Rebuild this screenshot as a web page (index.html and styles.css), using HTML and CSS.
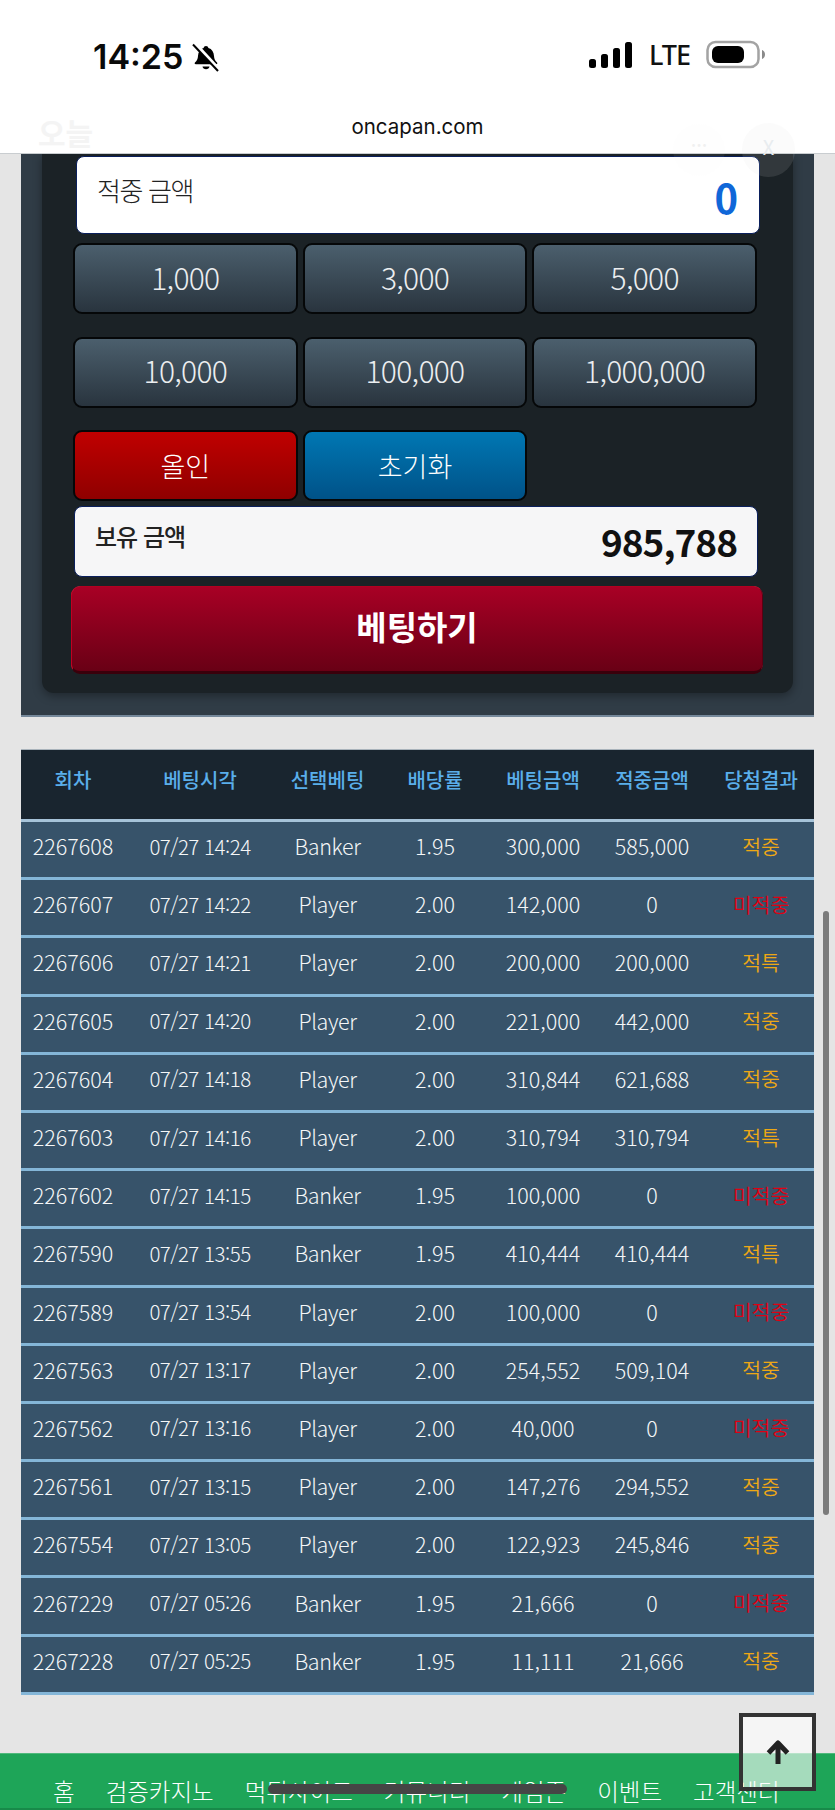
FILE: index.html
```html
<!DOCTYPE html>
<html lang="ko">
  <head>
    <meta charset="utf-8">
    <title>oncapan</title>
    <link rel="stylesheet" href="styles.css">
  </head>

  <body>
    <div class="top-bar">
      <div class="status-row">
        <div class="status-left">
          <span class="clock">14:25</span>
          <svg class="bell" width="28" height="30" viewBox="0 0 28 28">
            <path d="M14 3c1.300 0 2.200.9 2.400 2 3.600 1 5.400 4 5.600 8 .1 3 1.200 4.800 3 6.500.7.700.3 1.800-.8 1.800H3.800c-1.100 0-1.500-1.100-.8-1.800 1.800-1.700 2.900-3.500 3-6.500.2-4 2-7 5.600-8 .2-1.100 1.100-2 2.400-2z" fill="#000"/>
            <path d="M10.500 23.500h7c-.3 1.700-1.700 2.800-3.500 2.800s-3.200-1.100-3.500-2.800z" fill="#000"/>
            <path d="M3 .5l24 26" stroke="#fff" stroke-width="3.500"/>
            <path d="M1 1.500l25 26.500" stroke="#000" stroke-width="2"/>
          </svg>
        </div>
        <div class="status-right">
          <svg width="44" height="28" viewBox="0 0 44 28">
            <rect x="0" y="18" width="7" height="9" rx="2.500"/>
            <rect x="12" y="13" width="7" height="14" rx="2.500"/>
            <rect x="24" y="7" width="7" height="20" rx="2.500"/>
            <rect x="36" y="1" width="7" height="26" rx="2.500"/>
          </svg>
          <span class="lte">LTE</span>
          <svg width="60" height="30" viewBox="0 0 60 30">
            <rect x="1.500" y="2" width="51" height="25" rx="8" fill="#fff" stroke="#a3a3a3" stroke-width="2.500"/>
            <rect x="6" y="6" width="32" height="17" rx="6" fill="#000"/>
            <path d="M56 10c2 .5 3 2.500 3 4.500s-1 4-3 4.500z" fill="#8a8a8a"/>
          </svg>
        </div>
      </div>
      <div class="url-row">oncapan.com</div>
      <div class="ghost-title">오늘</div>
    </div>

    <div class="bet-panel">
      <div class="bet-inner">
        <div class="amount-box win-box">
          <span class="amount-label">적중 금액</span>
          <span class="amount-value blue">0</span>
        </div>

        <div class="chip-grid">
          <button class="chip">1,000</button>
          <button class="chip">3,000</button>
          <button class="chip">5,000</button>
          <button class="chip">10,000</button>
          <button class="chip">100,000</button>
          <button class="chip">1,000,000</button>
          <button class="chip chip-red">올인</button>
          <button class="chip chip-blue">초기화</button>
        </div>

        <div class="amount-box hold-box">
          <span class="amount-label bold">보유 금액</span>
          <span class="amount-value">985,788</span>
        </div>

        <button class="bet-button">베팅하기</button>
      </div>
    </div>

    <table class="history">
      <colgroup>
        <col class="c1"><col class="c2"><col class="c3"><col class="c4"><col class="c5"><col class="c6"><col class="c7">
      </colgroup>
      <thead>
        <tr>
          <th>회차</th>
          <th>베팅시각</th>
          <th>선택베팅</th>
          <th>배당률</th>
          <th>베팅금액</th>
          <th>적중금액</th>
          <th>당첨결과</th>
        </tr>
      </thead>
      <tbody>
        <tr><td>2267608</td><td>07/27 14:24</td><td>Banker</td><td>1.95</td><td>300,000</td><td>585,000</td><td class="hit">적중</td></tr>
        <tr><td>2267607</td><td>07/27 14:22</td><td>Player</td><td>2.00</td><td>142,000</td><td>0</td><td class="miss">미적중</td></tr>
        <tr><td>2267606</td><td>07/27 14:21</td><td>Player</td><td>2.00</td><td>200,000</td><td>200,000</td><td class="hit">적특</td></tr>
        <tr><td>2267605</td><td>07/27 14:20</td><td>Player</td><td>2.00</td><td>221,000</td><td>442,000</td><td class="hit">적중</td></tr>
        <tr><td>2267604</td><td>07/27 14:18</td><td>Player</td><td>2.00</td><td>310,844</td><td>621,688</td><td class="hit">적중</td></tr>
        <tr><td>2267603</td><td>07/27 14:16</td><td>Player</td><td>2.00</td><td>310,794</td><td>310,794</td><td class="hit">적특</td></tr>
        <tr><td>2267602</td><td>07/27 14:15</td><td>Banker</td><td>1.95</td><td>100,000</td><td>0</td><td class="miss">미적중</td></tr>
        <tr><td>2267590</td><td>07/27 13:55</td><td>Banker</td><td>1.95</td><td>410,444</td><td>410,444</td><td class="hit">적특</td></tr>
        <tr><td>2267589</td><td>07/27 13:54</td><td>Player</td><td>2.00</td><td>100,000</td><td>0</td><td class="miss">미적중</td></tr>
        <tr><td>2267563</td><td>07/27 13:17</td><td>Player</td><td>2.00</td><td>254,552</td><td>509,104</td><td class="hit">적중</td></tr>
        <tr><td>2267562</td><td>07/27 13:16</td><td>Player</td><td>2.00</td><td>40,000</td><td>0</td><td class="miss">미적중</td></tr>
        <tr><td>2267561</td><td>07/27 13:15</td><td>Player</td><td>2.00</td><td>147,276</td><td>294,552</td><td class="hit">적중</td></tr>
        <tr><td>2267554</td><td>07/27 13:05</td><td>Player</td><td>2.00</td><td>122,923</td><td>245,846</td><td class="hit">적중</td></tr>
        <tr><td>2267229</td><td>07/27 05:26</td><td>Banker</td><td>1.95</td><td>21,666</td><td>0</td><td class="miss">미적중</td></tr>
        <tr><td>2267228</td><td>07/27 05:25</td><td>Banker</td><td>1.95</td><td>11,111</td><td>21,666</td><td class="hit">적중</td></tr>
      </tbody>
    </table>

    <div class="bottom-nav">
      <a>홈</a>
      <a>검증카지노</a>
      <a>먹튀사이트</a>
      <a>커뮤니티</a>
      <a>게임존</a>
      <a>이벤트</a>
      <a>고객센터</a>
    </div>

    <div class="ghost-more">...</div>
    <div class="ghost-close">X</div>
    <div class="to-top">
      <svg width="28" height="28" viewBox="0 0 28 28">
        <path d="M14 25V5M4.500 14L14 4l9.500 10" fill="none" stroke="#222" stroke-width="5" stroke-linejoin="round"/>
      </svg>
    </div>
    <div class="home-bar"></div>
    <div class="scroll-thumb"></div>
  </body>
</html>
```

FILE: styles.css
```css
* {
  box-sizing: border-box;
}

html,
body {
  margin: 0;
  height: 1810px;
  overflow: hidden;
}

body {
  position: relative;
  background-color: #e5e5e5;
  font-family: "Noto Sans CJK KR", sans-serif;
}

/* phone status bar + url */
.top-bar {
  position: relative;
  height: 154px;
  background-color: #fff;
  border-bottom: 1px solid #c9cdd0;
}

.status-row {
  height: 113px;
  padding: 37px 69px 0 93px;
  display: flex;
  justify-content: space-between;
  align-items: flex-start;
}

.status-left {
  display: flex;
  align-items: center;
  gap: 9px;
}

.clock {
  font-family: "Inter", sans-serif;
  font-weight: 600;
  font-size: 34px;
  line-height: 40px;
  color: #0a0a0a;
}

.status-right {
  display: flex;
  align-items: center;
  gap: 16px;
  padding-top: 3px;
}

.lte {
  font-family: "Noto Sans", sans-serif;
  font-size: 27px;
  line-height: 30px;
  font-weight: 500;
  letter-spacing: -1px;
  color: #111;
}

.url-row {
  text-align: center;
  font-family: "Inter", sans-serif;
  font-size: 20.500px;
  line-height: 28px;
  color: #111;
}

.ghost-title {
  position: absolute;
  left: 38px;
  top: 113px;
  font-size: 30px;
  line-height: 38px;
  font-weight: 700;
  color: #f4f4f4;
}

.ghost-more {
  position: absolute;
  left: 673px;
  top: 124px;
  width: 52px;
  height: 52px;
  border-radius: 26px;
  background-color: rgba(240, 240, 240, 0.06);
  text-align: center;
  color: #f0f0f0;
  font-size: 20px;
}

.ghost-close {
  position: absolute;
  left: 742px;
  top: 123px;
  width: 53px;
  height: 54px;
  border-radius: 27px;
  background-color: rgba(225, 225, 225, 0.12);
  text-align: center;
  line-height: 48px;
  color: #e8ecef;
  font-size: 20px;
}

/* betting panel */
.bet-panel {
  margin: 0 21px;
  padding: 0 21px 22px;
  height: 563px;
  background-color: #303c46;
  border-bottom: 2px solid #75889a;
}

.bet-inner {
  height: 539px;
  padding: 2px 0 0;
  background-color: #1b2226;
  border-radius: 0 0 12px 12px;
  box-shadow: 0 3px 10px rgba(0, 0, 0, 0.35);
}

.amount-box {
  display: flex;
  justify-content: space-between;
  border: 1px solid #0a1f5c;
  border-radius: 8px;
  color: #222;
}

.win-box {
  margin: 0 33px 0 34px;
  height: 78px;
  padding: 15px 21px 0 20px;
  background-color: #fff;
}

.hold-box {
  margin: 5px 35px 0 32px;
  height: 71px;
  padding: 13px 20px 0 20px;
  background-color: #f6f6f7;
}

.amount-label {
  font-size: 26px;
  line-height: 36px;
  font-weight: 300;
  letter-spacing: -1.400px;
}

.amount-label.bold {
  font-size: 24px;
  line-height: 32px;
  font-weight: 500;
  letter-spacing: -1px;
}

.amount-value {
  font-size: 37px;
  line-height: 42px;
  font-weight: 700;
  letter-spacing: -1px;
  color: #111;
}

.amount-value.blue {
  font-size: 40px;
  line-height: 50px;
  letter-spacing: 0;
  color: #1067d8;
}

.chip-grid {
  margin: 9px 36px 0 31px;
  display: grid;
  grid-template-columns: repeat(3, 1fr);
  column-gap: 5px;
  row-gap: 22.500px;
}

.chip {
  height: 71px;
  padding: 0 0 4px;
  border: 2px solid #050708;
  border-radius: 9px;
  background-image: linear-gradient(#4b5f6d, #29343e);
  color: #eceef0;
  font-family: "Noto Sans CJK KR", sans-serif;
  font-size: 30px;
  font-weight: 300;
  letter-spacing: -0.700px;
}

.chip-red {
  padding: 0;
  background-image: linear-gradient(#c00000, #8f0000);
  color: #fff;
  font-size: 27px;
  letter-spacing: 0;
}

.chip-blue {
  padding: 0;
  background-image: linear-gradient(#0077b3, #005288);
  color: #fff;
  font-size: 27px;
  letter-spacing: 0;
}

.bet-button {
  display: block;
  width: 692px;
  height: 88px;
  margin: 9px 0 0 29px;
  padding: 0 0 6px;
  border: 1px solid #5c0012;
  border-left-color: #c00020;
  border-top-color: #b30020;
  border-bottom: 3px solid #3a000b;
  border-radius: 9px;
  background-image: linear-gradient(#a80025, #690015);
  color: #fff;
  font-family: "Noto Sans CJK KR", sans-serif;
  font-size: 33px;
  font-weight: 700;
}

/* history table */
.history {
  width: 793px;
  margin: 32px 0 0 21px;
  border-collapse: collapse;
  table-layout: fixed;
  font-size: 21.500px;
  text-align: center;
}

.c1 { width: 104px; }
.c2 { width: 150px; }
.c3 { width: 105px; }
.c4 { width: 110px; }
.c5 { width: 106px; }
.c6 { width: 112px; }
.c7 { width: 106px; }

.history th {
  height: 71px;
  padding: 0 0 10px;
  background-color: #19252f;
  border-top: 1px solid #a9b3bb;
  border-bottom: 3px solid #a6c3d9;
  color: #5aaeea;
  font-size: 20px;
  font-weight: 500;
}

.history td {
  height: 58.200px;
  padding: 0 0 8px;
  background-color: #37536a;
  border-bottom: 3px solid #84b6d8;
  color: #f5f7f8;
  font-weight: 300;
}

.history td:nth-child(2) {
  font-size: 20.500px;
  letter-spacing: -0.500px;
}

.history td:nth-child(3) {
  letter-spacing: -0.400px;
}

.history td.hit,
.history td.miss {
  font-size: 20.500px;
  font-weight: 350;
}

.history td.hit {
  color: #eea815;
}

.history td.miss {
  color: #e00012;
}

/* footer menu */
.bottom-nav {
  position: absolute;
  left: 0;
  right: 0;
  bottom: 0;
  height: 57px;
  padding: 20px 0 0 53px;
  display: flex;
  gap: 31px;
  background-color: #1ea558;
  border-top: 1px solid #4fb97c;
  border-bottom: 2px solid #178a49;
  color: #fff;
  font-size: 23.500px;
  line-height: 34px;
  font-weight: 300;
  white-space: nowrap;
}

.to-top {
  position: absolute;
  left: 739px;
  top: 1713px;
  width: 77px;
  height: 78px;
  padding-top: 22px;
  border: 4px solid #333;
  background-color: rgba(255, 255, 255, 0.6);
  text-align: center;
}

.home-bar {
  position: absolute;
  left: 268px;
  top: 1784px;
  width: 299px;
  height: 10px;
  border-radius: 5px;
  background-color: #454545;
}

.scroll-thumb {
  position: absolute;
  left: 823px;
  top: 911px;
  width: 6px;
  height: 604px;
  border-radius: 3px;
  background-color: #7b7b7b;
}
```
